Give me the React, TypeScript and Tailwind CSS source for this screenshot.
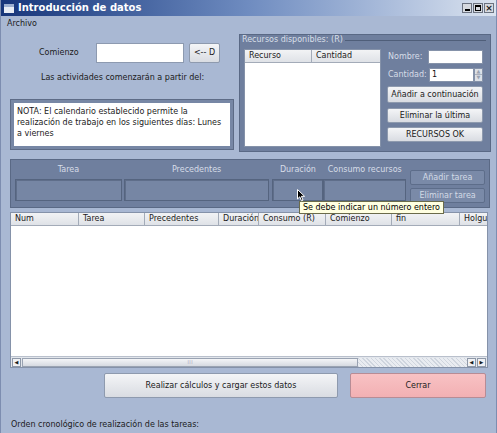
import React from "react";

const Btn: React.FC<{ className?: string; children: React.ReactNode }> = ({ className = "", children }) => (
  <div
    className={`flex items-center justify-center whitespace-nowrap border border-[#8e9aae] bg-gradient-to-b from-[#f4f5f7] to-[#d9dce2] text-[#1a1a1a] rounded-[2px] ${className}`}
  >
    {children}
  </div>
);

const DarkBtn: React.FC<{ children: React.ReactNode }> = ({ children }) => (
  <div className="flex items-center justify-center h-[15px] whitespace-nowrap border border-[#5d6d8a] bg-[#7a8aa8] text-[#d3dae6] rounded-[2px]">
    {children}
  </div>
);

const Field: React.FC<{ label: string; w: string }> = ({ label, w }) => (
  <div className={`flex flex-col ${w}`}>
    <div className="h-[18px] flex items-center justify-center whitespace-nowrap text-[#d7dde8]">{label}</div>
    <div className="h-[22px] border border-[#55647f] bg-[#7686a4] shadow-[inset_1px_1px_0_#5f6e8a]" />
  </div>
);

const cols: [string, string][] = [
  ["Num", "w-[68px]"],
  ["Tarea", "w-[66px]"],
  ["Precedentes", "w-[74px]"],
  ["Duración", "w-[40px]"],
  ["Consumo (R)", "w-[67px]"],
  ["Comienzo", "w-[66px]"],
  ["fin", "w-[68px]"],
  ["Holgura", "w-[40px]"],
];

export default function App() {
  return (
    <div
      className="relative w-[497px] h-[433px] overflow-hidden bg-[#a9b8d3] text-[8px] text-[#1b1b1b] border-x border-[#7d8db0]"
      style={{ fontFamily: '"DejaVu Sans", "Liberation Sans", sans-serif' }}
    >
      {/* Title bar */}
      <div className="h-[16px] flex items-center bg-gradient-to-r from-[#17357a] via-[#6f8cc0] to-[#dbe3ef]">
        <div className="ml-[3px] w-[10px] h-[9px] bg-[#e9edf5] border-t-[3px] border-[#9eb0d0]" />
        <span className="ml-[4px] text-[10px] font-bold text-white leading-none">Introducción de datos</span>
        <div className="ml-auto mr-[2px] flex gap-[1px]">
          <div className="w-[10px] h-[10px] bg-[#d6d9df] border border-[#6b7280] flex items-end justify-center">
            <div className="w-[5px] h-[2px] bg-black mb-[1px]" />
          </div>
          <div className="w-[10px] h-[10px] bg-[#d6d9df] border border-[#6b7280] flex items-center justify-center">
            <div className="w-[6px] h-[6px] border border-black border-t-2" />
          </div>
          <div className="w-[10px] h-[10px] bg-[#d6d9df] border border-[#6b7280] flex items-center justify-center text-[9px] font-bold leading-none">
            ×
          </div>
        </div>
      </div>

      {/* Menu */}
      <div className="h-[16px] flex items-center pl-[6px]">Archivo</div>

      {/* Top section */}
      <div className="flex pl-[9px]">
        <div className="w-[224px] flex flex-col">
          <div className="mt-[11px] flex items-center h-[20px]">
            <span className="ml-[29px] w-[57px]">Comienzo</span>
            <div className="w-[88px] h-[20px] bg-white border border-[#8d9ab0]" />
            <Btn className="ml-[5px] w-[31px] h-[20px]">&lt;-- D</Btn>
          </div>
          <div className="mt-[8px] ml-[31px] h-[14px] flex items-center whitespace-nowrap">Las actividades comenzarán a partir del:</div>
          <div className="mt-[14px] h-[51px] border border-[#5d6b86] bg-[#7787a5] p-[3px]">
            <div className="h-full bg-white pl-[3px] pr-[2px] pt-[3px] leading-[11px]">
              NOTA: El calendario establecido permite la realización de trabajo en los siguientes días: Lunes a viernes
            </div>
          </div>
        </div>

        {/* Recursos group */}
        <div className="ml-[5px] mt-[2px] w-[252px] h-[118px] bg-[#6f7f9e] border border-[#5a6985] relative">
          <div className="absolute left-[4px] right-[4px] top-[5px] border-t border-[#4f5e79]" />
          <div className="relative h-[10px] flex">
            <span className="bg-[#6f7f9e] text-[#d9dfe9] ml-[2px] pr-[2px] leading-[10px]">Recursos disponibles: (R)</span>
          </div>
          <div className="flex mt-[4px] ml-[4px]">
            <div className="w-[137px] h-[98px] bg-white border border-[#8592a9] flex flex-col">
              <div className="h-[13px] flex border-b border-[#a3abb8] bg-gradient-to-b from-[#f2f3f5] to-[#dfe2e7]">
                <div className="w-[67px] border-r border-[#a3abb8] pl-[4px] flex items-center">Recurso</div>
                <div className="flex-1 pl-[4px] flex items-center">Cantidad</div>
              </div>
            </div>
            <div className="ml-[6px] flex flex-col w-[97px] text-[#d7dde8]">
              <div className="flex items-center h-[15px]">
                <span className="w-[41px] pl-[1px]">Nombre:</span>
                <div className="w-[55px] h-[14px] bg-white border border-[#8592a9]" />
              </div>
              <div className="flex items-center h-[15px] mt-[3px]">
                <span className="w-[42px] pl-[1px]">Cantidad:</span>
                <div className="w-[45px] h-[14px] bg-white border border-[#8592a9] text-[#111] pl-[2px] leading-[12px]">1</div>
                <div className="w-[9px] h-[14px] flex flex-col border border-[#8592a9] bg-[#dde1e7]">
                  <div className="flex-1 flex items-center justify-center text-[#9aa3b2] text-[5px] leading-none border-b border-[#aab1bd]">▲</div>
                  <div className="flex-1 flex items-center justify-center text-[#9aa3b2] text-[5px] leading-none">▼</div>
                </div>
              </div>
              <Btn className="mt-[4px] h-[17px] w-[96px]">Añadir a continuación</Btn>
              <Btn className="mt-[5px] h-[15px] w-[96px]">Eliminar la última</Btn>
              <Btn className="mt-[4px] h-[15px] w-[96px]">RECURSOS OK</Btn>
            </div>
          </div>
        </div>
      </div>

      {/* Task panel */}
      <div className="mt-[7px] ml-[9px] w-[480px] h-[49px] bg-[#6f7f9e] border border-[#5a6985] flex px-[4px] pt-[1px]">
        <Field label="Tarea" w="w-[107px]" />
        <div className="w-[2px]" />
        <Field label="Precedentes" w="w-[146px]" />
        <div className="w-[3px]" />
        <Field label="Duración" w="w-[51px]" />
        <Field label="Consumo recursos" w="w-[83px]" />
        <div className="ml-[4px] flex flex-col w-[75px] mt-[9px] gap-[3px]">
          <DarkBtn>Añadir tarea</DarkBtn>
          <DarkBtn>Eliminar tarea</DarkBtn>
        </div>
      </div>

      {/* Table */}
      <div className="mt-[4px] ml-[9px] w-[478px] h-[156px] bg-white border border-[#8592a9] flex flex-col overflow-hidden">
        <div className="h-[13px] flex border-b border-[#a3abb8] bg-gradient-to-b from-[#f2f3f5] to-[#dfe2e7] shrink-0 whitespace-nowrap">
          {cols.map(([c, w]) => (
            <div key={c} className={`${w} shrink-0 border-r border-[#a3abb8] pl-[4px] flex items-center overflow-hidden`}>
              {c}
            </div>
          ))}
        </div>
        <div className="flex-1" />
        <div className="h-[11px] flex items-center border-t border-[#b9c0cc] bg-[#e2e6ec] px-[1px] shrink-0">
          <div className="w-[9px] h-[9px] border border-[#8e98a8] bg-[#f0f1f4] flex items-center justify-center text-[5px] leading-none">◀</div>
          <div className="ml-[1px] w-[336px] h-[9px] border border-[#9aa3b2] bg-gradient-to-b from-[#f4f5f7] to-[#d6dae1] flex items-center justify-center text-[6px] text-[#aab] leading-none">
            ⁞⁞⁞
          </div>
          <div className="flex-1 h-[9px] bg-[repeating-linear-gradient(45deg,#cfd5de_0_1px,#e9ecf1_1px_3px)]" />
          <div className="w-[9px] h-[9px] border border-[#8e98a8] bg-[#f0f1f4] flex items-center justify-center text-[5px] leading-none">◀</div>
          <div className="ml-[1px] w-[9px] h-[9px] border border-[#8e98a8] bg-[#f0f1f4] flex items-center justify-center text-[5px] leading-none">▶</div>
        </div>
      </div>

      {/* Action buttons */}
      <div className="mt-[5px] flex">
        <Btn className="ml-[103px] w-[234px] h-[25px]">Realizar cálculos y cargar estos datos</Btn>
        <div className="ml-[12px] w-[136px] h-[25px] flex items-center justify-center border border-[#b78c95] bg-gradient-to-b from-[#f8c2c4] to-[#f2b0b3] rounded-[2px]">
          Cerrar
        </div>
      </div>

      <div className="mt-[20px] ml-[10px] h-[14px] flex items-center">Orden cronológico de realización de las tareas:</div>

      {/* Tooltip + cursor overlay */}
      <div className="absolute left-[298px] top-[201px] h-[13px] px-[3px] bg-[#ffffe1] border border-[#6b6b4a] leading-[11px] text-black whitespace-nowrap">
        Se debe indicar un número entero
      </div>
      <svg className="absolute left-[296px] top-[189px]" width="9" height="13" viewBox="0 0 9 13">
        <path d="M0.5 0.5 L0.5 10 L2.8 7.8 L4.5 11.8 L6 11.1 L4.4 7.3 L7.6 7.3 Z" fill="black" stroke="white" strokeWidth="1" />
      </svg>
    </div>
  );
}
